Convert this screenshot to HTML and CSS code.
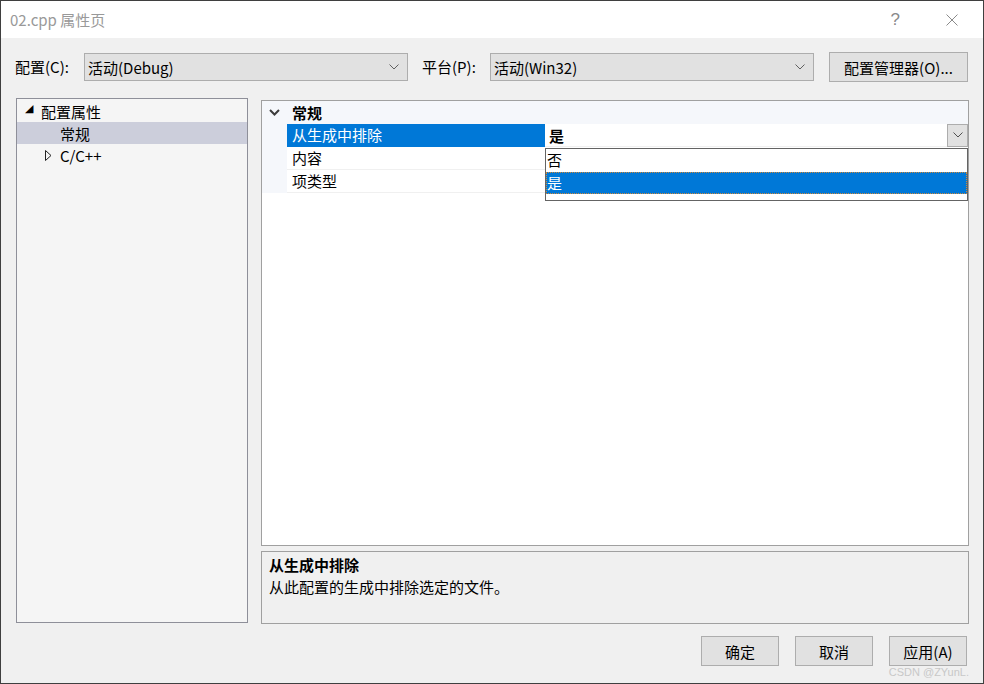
FILE: index.html
```html
<!DOCTYPE html>
<html lang="zh-CN">
<head>
    <meta charset="UTF-8">
    <title>02.cpp 属性页</title>
    <link rel="stylesheet" href="styles.css">
</head>
<body>
<div class="dialog">
    <div class="titlebar">
        <span class="title">02.cpp 属性页</span>
        <span class="help">?</span>
        <svg class="close" width="12" height="12" viewBox="0 0 12 12">
            <path d="M0.5 0.5 L11.5 11.5 M11.5 0.5 L0.5 11.5" stroke="#8a8a8a" stroke-width="1" fill="none"/>
        </svg>
    </div>

    <div class="toolbar">
        <label class="label label-config">配置(C):</label>
        <div class="combo">
            <span>活动(Debug)</span>
            <svg class="combo-arrow" width="10" height="6" viewBox="0 0 10 6"><path d="M0.5 0.5 L5 5 L9.5 0.5" stroke="#606060" fill="none"/></svg>
        </div>
        <label class="label label-platform">平台(P):</label>
        <div class="combo">
            <span>活动(Win32)</span>
            <svg class="combo-arrow" width="10" height="6" viewBox="0 0 10 6"><path d="M0.5 0.5 L5 5 L9.5 0.5" stroke="#606060" fill="none"/></svg>
        </div>
        <button class="btn btn-manager">配置管理器(O)...</button>
    </div>

    <div class="main">
        <div class="tree">
            <div class="tree-row">
                <span class="tw-open">&#9698;</span>
                <span>配置属性</span>
            </div>
            <div class="tree-row child selected"><span>常规</span></div>
            <div class="tree-row">
                <svg class="tw-closed" width="7" height="11" viewBox="0 0 7 11"><path d="M0.5 0.5 L6 5.5 L0.5 10.5 Z" stroke="#222" fill="none"/></svg>
                <span>C/C++</span>
            </div>
        </div>

        <div class="right">
            <div class="grid">
                <div class="grid-rows">
                    <div class="grid-row category">
                        <div class="gutter">
                            <svg width="11" height="7" viewBox="0 0 11 7"><path d="M1 1 L5.5 5.5 L10 1" stroke="#3c3c3c" stroke-width="2" fill="none"/></svg>
                        </div>
                        <div class="cat-name">常规</div>
                    </div>
                    <div class="grid-row">
                        <div class="gutter"></div>
                        <div class="prop-name active">从生成中排除</div>
                        <div class="prop-value bold">
                            <span>是</span>
                            <div class="drop-btn">
                                <svg width="10" height="6" viewBox="0 0 10 6"><path d="M0.5 0.5 L5 5 L9.5 0.5" stroke="#505050" fill="none"/></svg>
                            </div>
                        </div>
                    </div>
                    <div class="grid-row">
                        <div class="gutter"></div>
                        <div class="prop-name">内容</div>
                        <div class="prop-value"></div>
                    </div>
                    <div class="grid-row">
                        <div class="gutter"></div>
                        <div class="prop-name">项类型</div>
                        <div class="prop-value"></div>
                    </div>
                </div>

                <div class="droplist">
                    <div class="drop-item">否</div>
                    <div class="drop-item picked">是</div>
                </div>
            </div>

            <div class="desc">
                <div class="desc-title">从生成中排除</div>
                <div class="desc-text">从此配置的生成中排除选定的文件。</div>
            </div>
        </div>
    </div>

    <div class="footer">
        <button class="btn btn-small">确定</button>
        <button class="btn btn-small">取消</button>
        <button class="btn btn-small">应用(A)</button>
        <span class="watermark">CSDN @ZYunL.</span>
    </div>
</div>
</body>
</html>
```

FILE: styles.css
```css
html, body {
    margin: 0;
    padding: 0;
}
body {
    font-family: "Noto Sans CJK SC", "Liberation Sans", sans-serif;
    font-size: 15px;
    color: #000;
}
.dialog {
    width: 984px;
    height: 684px;
    box-sizing: border-box;
    border: 1px solid #3f3f3f;
    background-color: #f0f0f0;
    position: relative;
}
.titlebar {
    height: 37px;
    background-color: #fff;
    display: flex;
    align-items: center;
    padding-left: 9px;
}
.title {
    color: #999;
    font-size: 15px;
    flex: 1;
}
.help {
    color: #8a8a8a;
    font-family: "Liberation Sans", sans-serif;
    font-size: 17px;
    margin-right: 46px;
}
.close {
    margin-right: 25px;
}
.toolbar {
    display: flex;
    align-items: center;
    height: 30px;
    margin-top: 14px;
    padding-left: 14px;
}
.label {
    line-height: 28px;
}
.label-config {
    width: 69px;
}
.label-platform {
    width: 68px;
    margin-left: 14px;
}
.combo {
    width: 324px;
    height: 28px;
    box-sizing: border-box;
    border: 1px solid #adadad;
    background-color: #e1e1e1;
    display: flex;
    align-items: center;
    justify-content: space-between;
    padding: 0 8px 0 3px;
}
.btn {
    font-family: "Noto Sans CJK SC", "Liberation Sans", sans-serif;
    font-size: 15px;
    color: #000;
    background-color: #e1e1e1;
    border: 1px solid #adadad;
    padding: 0;
    margin: 0;
}
.btn-manager {
    width: 139px;
    height: 30px;
    margin-left: 15px;
}
.main {
    display: flex;
    margin-top: 16px;
    padding-left: 15px;
    height: 526px;
}
.tree {
    width: 232px;
    height: 525px;
    box-sizing: border-box;
    border: 1px solid #8e8f99;
    background-color: #f5f5f5;
    padding-top: 1px;
}
.tree-row {
    height: 22px;
    display: flex;
    align-items: center;
    padding-left: 28px;
    position: relative;
}
.tree-row.child {
    padding-left: 43px;
}
.tree-row.selected {
    background-color: #cccedb;
}
.tw-open {
    position: absolute;
    left: 8px;
    top: 2px;
    font-size: 11px;
    font-family: "DejaVu Sans", sans-serif;
}
.tw-closed {
    position: absolute;
    left: 28px;
    top: 6px;
}
.tree-row:nth-child(3) {
    padding-left: 43px;
}
.tree-row:first-child {
    padding-left: 24px;
}
.right {
    margin-left: 13px;
    width: 708px;
    display: flex;
    flex-direction: column;
}
.grid {
    margin-top: 2px;
    height: 446px;
    box-sizing: border-box;
    border: 1px solid #a0a0a0;
    background-color: #fff;
    position: relative;
}
.grid-row {
    display: flex;
    height: 23px;
}
.gutter {
    width: 25px;
    background-color: #f5f7fb;
    display: flex;
    align-items: center;
    justify-content: center;
}
.category {
    background-color: #f5f7fb;
}
.category .gutter {
    margin-right: 5px;
}
.cat-name {
    font-weight: bold;
    line-height: 23px;
}
.prop-name {
    width: 253px;
    padding-left: 5px;
    line-height: 22px;
    border-bottom: 1px solid #f0f0f0;
}
.prop-name.active {
    background-color: #0078d7;
    color: #fff;
    border-bottom-color: #0078d7;
}
.prop-value {
    flex: 1;
    border-bottom: 1px solid #f0f0f0;
    display: flex;
    align-items: center;
    justify-content: space-between;
    padding-left: 4px;
}
.prop-value.bold {
    font-weight: bold;
}
.drop-btn {
    width: 19px;
    height: 21px;
    border: 1px solid #adadad;
    background-color: #e1e1e1;
    display: flex;
    align-items: center;
    justify-content: center;
}
.droplist {
    position: absolute;
    left: 283px;
    top: 47px;
    width: 423px;
    height: 53px;
    box-sizing: border-box;
    border: 1px solid #646464;
    background-color: #fff;
}
.drop-item {
    height: 22px;
    line-height: 22px;
    padding-left: 1px;
    box-sizing: border-box;
}
.drop-item.picked {
    margin-top: 1px;
    background-color: #0078d7;
    color: #fff;
    border: 1px dotted #d08a3a;
    line-height: 20px;
    padding-left: 0;
}
.desc {
    margin-top: 5px;
    height: 73px;
    box-sizing: border-box;
    border: 1px solid #a0a0a0;
    background-color: #f0f0f0;
    padding: 2px 7px;
}
.desc-title {
    font-weight: bold;
    line-height: 22px;
}
.desc-text {
    line-height: 22px;
}
.footer {
    display: flex;
    justify-content: flex-end;
    margin-top: 12px;
    padding-right: 16px;
    gap: 16px;
    position: relative;
}
.btn-small {
    width: 78px;
    height: 30px;
}
.watermark {
    position: absolute;
    right: 14px;
    top: 30px;
    font-family: "Liberation Sans", sans-serif;
    font-size: 11px;
    color: #c8c8c8;
}
```
